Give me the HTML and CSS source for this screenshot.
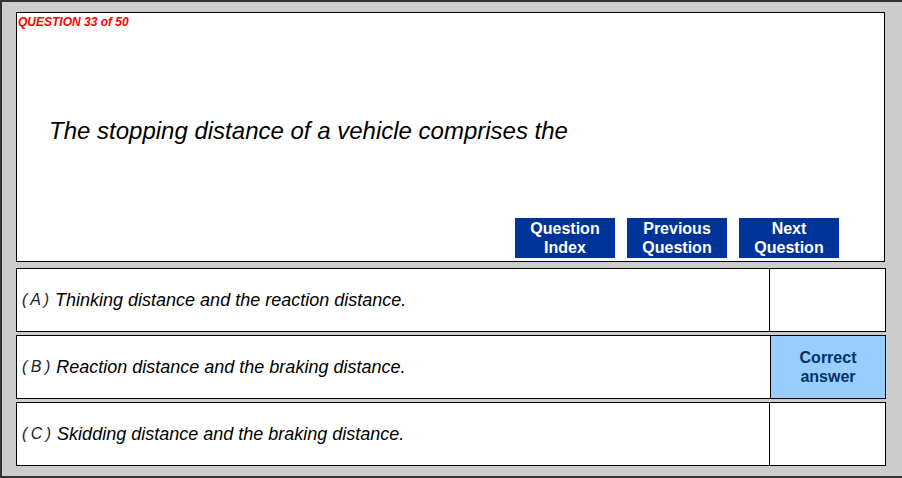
FILE: index.html
```html
<!DOCTYPE html>
<html lang="en">
<head>
    <meta charset="UTF-8">
    <title>Question 33 of 50</title>
    <link rel="stylesheet" href="styles.css">
</head>
<body>
    <div class="frame">
        <div class="question-box">
            <div class="counter">QUESTION 33 of 50</div>
            <p class="question">The stopping distance of a vehicle comprises the</p>
            <div class="nav">
                <button type="button" class="nav-btn">Question<br>Index</button>
                <button type="button" class="nav-btn">Previous<br>Question</button>
                <button type="button" class="nav-btn">Next<br>Question</button>
            </div>
        </div>

        <div class="answer">
            <div class="answer-text"><span class="letter">( A )</span> Thinking distance and the reaction distance.</div>
            <div class="answer-mark"></div>
        </div>
        <div class="answer">
            <div class="answer-text"><span class="letter">( B )</span> Reaction distance and the braking distance.</div>
            <div class="answer-mark correct">Correct<br>answer</div>
        </div>
        <div class="answer">
            <div class="answer-text"><span class="letter">( C )</span> Skidding distance and the braking distance.</div>
            <div class="answer-mark"></div>
        </div>
    </div>
</body>
</html>
```

FILE: styles.css
```css
body {
    margin: 0;
    font-family: "Liberation Sans", Arial, sans-serif;
    background-color: #fff;
}
.frame {
    height: 478px;
    box-sizing: border-box;
    background-color: #cccccc;
    border-top: 2px solid #333;
    border-left: 2px solid #333;
    border-bottom: 2px solid #333;
    padding: 10px 0 0 14px;
}
.question-box {
    width: 869px;
    height: 250px;
    box-sizing: border-box;
    background-color: #fff;
    border: 1px solid #000;
    display: flex;
    flex-direction: column;
    margin-bottom: 6px;
}
.counter {
    color: #ff0000;
    font-size: 12px;
    font-weight: bold;
    font-style: italic;
    padding: 2px 0 0 1px;
}
.question {
    margin: 88px 0 0 32px;
    font-size: 24px;
    font-style: italic;
}
.nav {
    margin-top: auto;
    display: flex;
    gap: 12px;
    justify-content: flex-end;
    padding: 0 45px 3px 0;
}
.nav-btn {
    width: 100px;
    height: 40px;
    background-color: #003399;
    color: #fff;
    border: none;
    font-family: "Liberation Sans", Arial, sans-serif;
    font-size: 16px;
    font-weight: bold;
    line-height: 19px;
    padding: 0;
}
.answer {
    width: 870px;
    height: 64px;
    box-sizing: border-box;
    background-color: #fff;
    border: 1px solid #000;
    display: flex;
    margin-bottom: 3px;
}
.answer-text {
    flex: 1;
    display: flex;
    align-items: center;
    padding-left: 5px;
    font-size: 18px;
    font-style: italic;
    white-space: pre;
}
.letter {
    color: #222;
    font-size: 16px;
    word-spacing: -1px;
    margin-right: 1px;
}
.answer-mark {
    width: 115px;
    border-left: 1px solid #000;
}
.correct {
    background-color: #99ccff;
    color: #003366;
    font-size: 16px;
    font-weight: bold;
    text-align: center;
    line-height: 19px;
    padding-top: 12px;
    box-sizing: border-box;
}
```
